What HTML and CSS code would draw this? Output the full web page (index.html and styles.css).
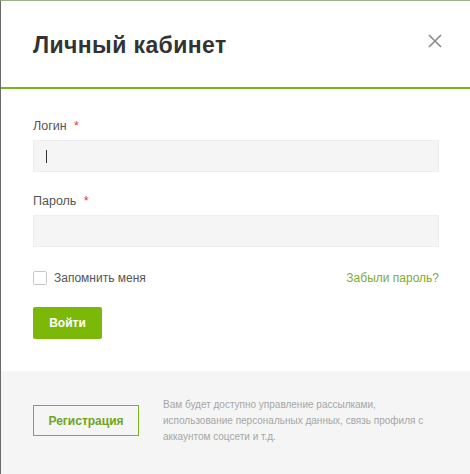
FILE: index.html
```html
<!DOCTYPE html>
<html lang="ru">
<head>
    <meta charset="UTF-8">
    <meta name="viewport" content="width=device-width, initial-scale=1.0">
    <title>Личный кабинет</title>
    <link rel="stylesheet" href="styles.css">
</head>
<body>

    <div class="modal">
        <div class="modal-head">
            <h1>Личный кабинет</h1>
            <button class="close" aria-label="Закрыть">
                <svg width="14" height="14" viewBox="0 0 14 14">
                    <path d="M1 1L13 13M13 1L1 13" stroke="#8a8a8a" stroke-width="1.6" fill="none"/>
                </svg>
            </button>
        </div>

        <form class="modal-body">
            <label class="field-label">Логин <span class="req">*</span></label>
            <div class="input"><span class="caret"></span></div>

            <label class="field-label">Пароль <span class="req">*</span></label>
            <div class="input"></div>

            <div class="row">
                <label class="remember"><span class="check"></span>Запомнить меня</label>
                <a class="forgot" href="#">Забыли пароль?</a>
            </div>

            <button class="login" type="button">Войти</button>
        </form>

        <div class="modal-foot">
            <button class="register" type="button">Регистрация</button>
            <p class="note">Вам будет доступно управление рассылками, использование персональных данных, связь профиля с аккаунтом соцсети и т.д.</p>
        </div>
    </div>

</body>
</html>
```

FILE: styles.css
```css
body {
    margin: 0;
    font-family: "Liberation Sans", Arial, sans-serif;
    background: #fff;
}

.modal {
    width: 469px;
    height: 473px;
    border-top: 1px solid #9fb088;
    border-left: 1px solid #6a6a6a;
    background: #fff;
    display: flex;
    flex-direction: column;
}

.modal-head {
    height: 86px;
    padding: 0 28px 0 32px;
    display: flex;
    align-items: center;
    justify-content: space-between;
    border-bottom: 2px solid #7cb518;
}

h1 {
    margin: 2px 0 0;
    font-size: 23px;
    letter-spacing: 0.4px;
    font-weight: bold;
    color: #333;
}

.close {
    border: none;
    background: none;
    padding: 0;
    margin-top: -4px;
    cursor: pointer;
}

.modal-body {
    padding: 29px 31px 32px 32px;
    display: flex;
    flex-direction: column;
}

.field-label {
    font-size: 12.5px;
    line-height: 16px;
    color: #555;
    margin-bottom: 6px;
}

.req {
    color: #e0393e;
    margin-left: 4px;
}

.input {
    height: 30px;
    background: #f5f5f5;
    border: 1px solid #eee;
    margin-bottom: 21px;
    display: flex;
    align-items: center;
}

.caret {
    width: 1px;
    height: 13px;
    background: #333;
    margin-left: 12px;
}

.row {
    display: flex;
    justify-content: space-between;
    align-items: center;
    height: 20px;
    font-size: 12px;
}

.remember {
    display: flex;
    align-items: center;
    color: #555;
}

.check {
    width: 12px;
    height: 12px;
    border: 1px solid #c8c8c8;
    border-radius: 2px;
    background: #fff;
    margin-right: 7px;
}

.forgot {
    color: #80ac2c;
    text-decoration: none;
}

.login {
    margin-top: 19px;
    width: 69px;
    height: 32px;
    border: none;
    border-radius: 2px;
    background: #7cb808;
    color: #fff;
    font-family: inherit;
    font-size: 12px;
    font-weight: bold;
    cursor: pointer;
}

.modal-foot {
    flex: 1;
    background: #f5f5f5;
    display: flex;
    align-items: center;
    padding: 0 30px 4px 32px;
}

.register {
    flex: none;
    width: 106px;
    height: 31px;
    border: 1px solid #7cb518;
    background: transparent;
    color: #6da51c;
    font-family: inherit;
    font-size: 12px;
    font-weight: bold;
    margin-right: 24px;
    cursor: pointer;
}

.note {
    margin: 0;
    width: 270px;
    font-size: 10px;
    line-height: 16px;
    color: #a6a6a6;
}
```
